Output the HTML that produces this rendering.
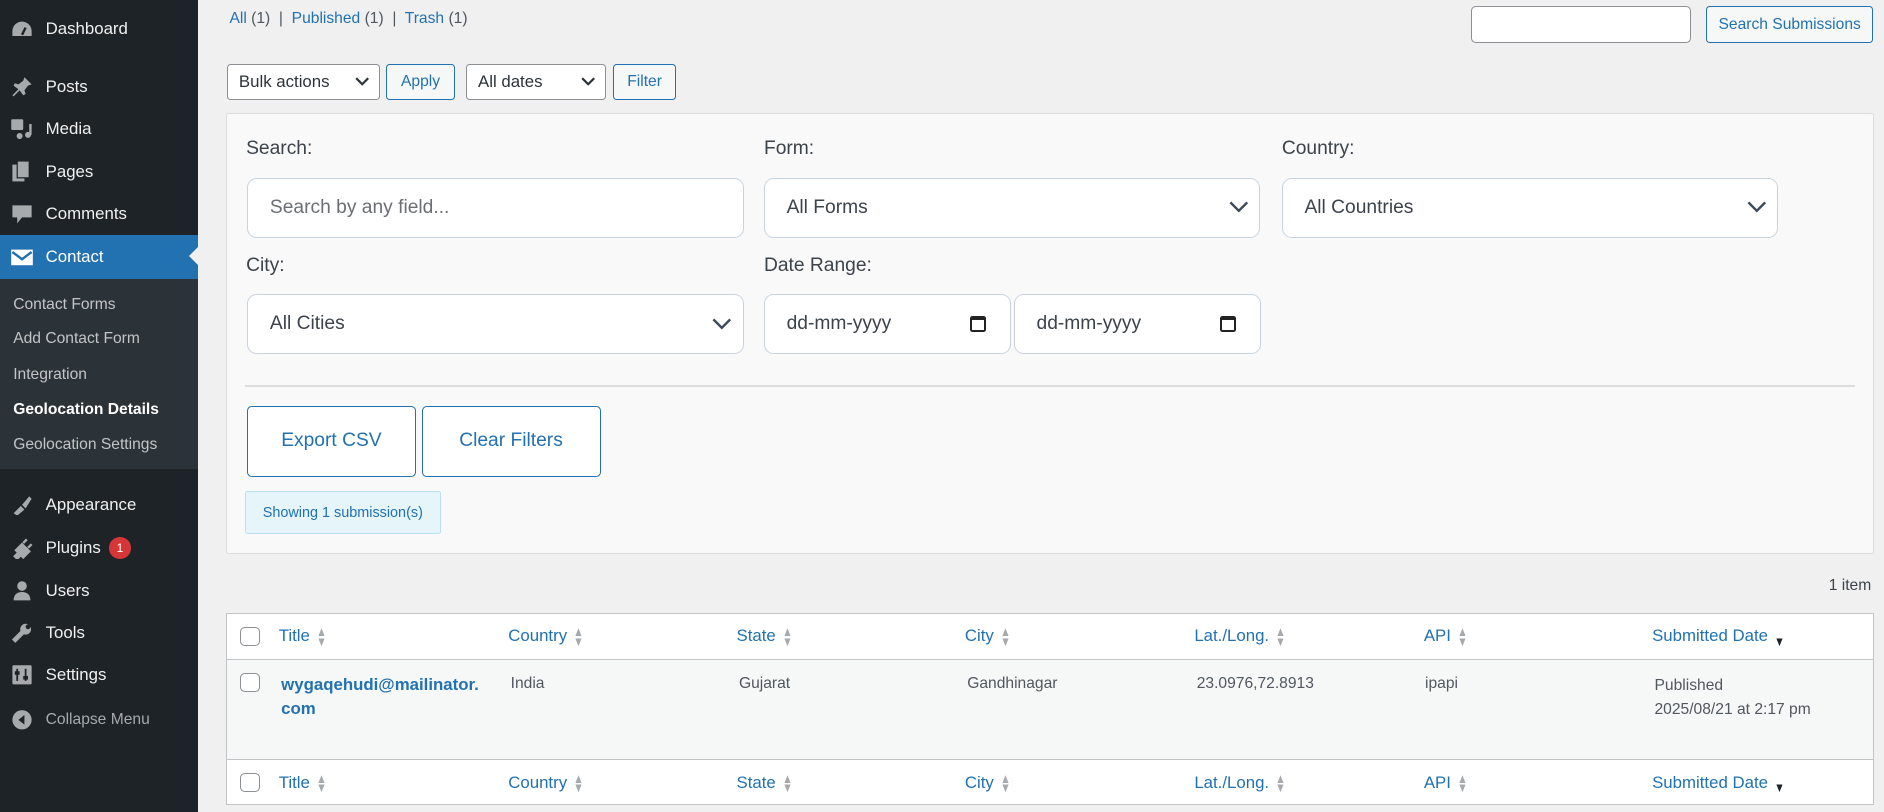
<!DOCTYPE html>
<html><head><meta charset="utf-8"><style>
*{box-sizing:border-box;margin:0;padding:0}
html,body{width:1884px;height:812px;overflow:hidden;background:#f0f0f1}
#w{width:1568px;height:676px;zoom:1.20153;position:relative;font-family:"Liberation Sans",sans-serif;color:#3c434a;font-size:13px}
#sb{position:absolute;left:0;top:0;width:165px;height:676px;background:#1d2327}
.mi{position:absolute;left:0;width:165px;height:34px;color:#f0f0f1;font-size:14px;display:flex;align-items:center}
.mi svg{margin-left:8px;margin-right:10px;flex:none}
.sub{position:absolute;left:0;top:232px;width:165px;height:158px;background:#2c3338}
.sub div{position:absolute;left:11px;color:#c3c4c7;font-size:13px}
a{color:#2271b1;text-decoration:none}
.lbl{position:absolute;font-size:16px;color:#3c434a}
.in{position:absolute;background:#fff;border:1px solid #c8d3e0;border-radius:8px;height:50px;font-size:16px;color:#3c434a;display:flex;align-items:center;padding-left:18px}
.chev{position:absolute;right:8px;top:18px}
.btn{position:absolute;border:1px solid #2271b1;border-radius:3px;color:#2271b1;background:#f6f7f7;font-size:13px;display:flex;align-items:center;justify-content:center}
.sel{position:absolute;border:1px solid #8c8f94;border-radius:3px;background:#fff;font-size:14px;color:#2c3338;display:flex;align-items:center;padding-left:9px}
.hd{position:absolute;font-size:14px;color:#2271b1}
.ar{color:#a7aaad;font-size:11px;display:inline-block;line-height:8px;vertical-align:middle;margin-left:4px;transform:scaleX(.8)}
.cb{position:absolute;width:16px;height:16px;border:1px solid #8c8f94;border-radius:4px;background:#fff}
.cell{position:absolute;font-size:13px;color:#50575e}
</style></head><body><div id="w">
<div id="sb">
<div class="mi" style="top:7px"><svg width="20" height="18"><path d="M10 3a8 8 0 0 0-8 8v4h16v-4a8 8 0 0 0-8-8z" fill="#a7aaad"/><path d="M10 14l3-6" stroke="#1d2327" stroke-width="2"/></svg>Dashboard</div>
<div class="mi" style="top:55px"><svg width="20" height="18"><path d="M12 1l6 6-3 1-3 4 1 3-2 1-3-4-5 5-1-1 5-5-4-3 1-2 3 1 4-3z" fill="#a7aaad"/></svg>Posts</div>
<div class="mi" style="top:90px"><svg width="20" height="18"><rect x="1" y="1" width="10" height="9" rx="1" fill="#a7aaad"/><circle cx="8" cy="15" r="2.5" fill="#a7aaad"/><circle cx="15" cy="14" r="2.5" fill="#a7aaad"/><path d="M17 5v9" stroke="#a7aaad" stroke-width="2"/></svg>Media</div>
<div class="mi" style="top:126px"><svg width="20" height="18"><rect x="2" y="3" width="10" height="14" fill="#a7aaad"/><rect x="6" y="0" width="10" height="14" fill="#a7aaad" stroke="#1d2327"/></svg>Pages</div>
<div class="mi" style="top:161px"><svg width="20" height="18"><path d="M2 2h16v10H10l-4 5v-5H2z" fill="#a7aaad"/></svg>Comments</div>
<div class="mi" style="top:196px;height:36px;background:#2271b1;color:#fff"><svg width="20" height="18"><rect x="1" y="3" width="18" height="13" fill="#fff"/><path d="M2 5l8 6 8-6" stroke="#2271b1" stroke-width="2" fill="none"/></svg>Contact<span style="position:absolute;right:0;top:10px;border:8px solid transparent;border-right-color:#f0f0f1"></span></div>
<div class="sub">
<div style="top:14px">Contact Forms</div>
<div style="top:43px">Add Contact Form</div>
<div style="top:73px">Integration</div>
<div style="top:102px;color:#fff;font-weight:bold">Geolocation Details</div>
<div style="top:131px">Geolocation Settings</div>
</div>
<div class="mi" style="top:403px"><svg width="20" height="18"><path d="M3 16l6-6 3 3-6 5zM10 9l6-7 2 2-5 8z" fill="#a7aaad"/></svg>Appearance</div>
<div class="mi" style="top:439px"><svg width="20" height="18"><path d="M4 16l3-3-2-2 5-5 6 6-5 5-2-2-3 3zM11 5l3-3M15 9l3-3" stroke="#a7aaad" stroke-width="2" fill="#a7aaad"/></svg>Plugins<span style="margin-left:7px;background:#d63638;color:#fff;border-radius:9px;font-size:10px;width:18px;height:18px;display:inline-flex;align-items:center;justify-content:center">1</span></div>
<div class="mi" style="top:475px"><svg width="20" height="18"><circle cx="10" cy="5" r="4" fill="#a7aaad"/><path d="M3 17c0-5 3-7 7-7s7 2 7 7z" fill="#a7aaad"/></svg>Users</div>
<div class="mi" style="top:510px"><svg width="20" height="18"><path d="M3 16l8-8" stroke="#a7aaad" stroke-width="4"/><circle cx="13" cy="6" r="4.5" fill="#a7aaad"/><circle cx="15" cy="4" r="2" fill="#1d2327"/></svg>Tools</div>
<div class="mi" style="top:545px"><svg width="20" height="18"><rect x="2" y="1" width="16" height="16" rx="1" fill="#a7aaad"/><path d="M6 4v10M13 4v10" stroke="#1d2327" stroke-width="1.5"/><rect x="4" y="6" width="4" height="3" fill="#1d2327"/><rect x="11" y="10" width="4" height="3" fill="#1d2327"/></svg>Settings</div>
<div class="mi" style="top:582px;color:#a7aaad;font-size:13px"><svg width="20" height="18"><circle cx="10" cy="9" r="8" fill="#a7aaad"/><path d="M12 5l-5 4 5 4z" fill="#1d2327"/></svg>Collapse Menu</div>
</div>

<div style="position:absolute;left:191px;top:8px;font-size:13px;color:#50575e"><a>All</a> (1) &nbsp;|&nbsp; <a>Published</a> (1) &nbsp;|&nbsp; <a>Trash</a> (1)</div>
<div style="position:absolute;left:1224px;top:5px;width:183px;height:31px;background:#fff;border:1px solid #8c8f94;border-radius:4px"></div>
<div class="btn" style="left:1420px;top:5px;width:139px;height:31px">Search Submissions</div>

<div class="sel" style="left:189px;top:53px;width:127px;height:30px">Bulk actions<svg style="position:absolute;right:8px;top:10px" width="12" height="8"><path d="M1 1l5 5 5-5" stroke="#2c3338" stroke-width="1.8" fill="none"/></svg></div>
<div class="btn" style="left:321px;top:53px;width:58px;height:30px">Apply</div>
<div class="sel" style="left:388px;top:53px;width:116px;height:30px">All dates<svg style="position:absolute;right:8px;top:10px" width="12" height="8"><path d="M1 1l5 5 5-5" stroke="#2c3338" stroke-width="1.8" fill="none"/></svg></div>
<div class="btn" style="left:510px;top:53px;width:53px;height:30px">Filter</div>

<div style="position:absolute;left:188px;top:94px;width:1372px;height:367px;background:#f9f9f9;border:1px solid #dcdcde;border-radius:2px">
<div class="lbl" style="left:16px;top:20px">Search:</div>
<div class="lbl" style="left:447px;top:20px">Form:</div>
<div class="lbl" style="left:878px;top:20px">Country:</div>
<div class="in" style="left:17px;top:53px;width:413px;color:#6b6f73">Search by any field...</div>
<div class="in" style="left:447px;top:53px;width:413px">All Forms<svg class="chev" width="18" height="12"><path d="M2 2l7 7 7-7" stroke="#3c4a5c" stroke-width="2" fill="none"/></svg></div>
<div class="in" style="left:878px;top:53px;width:413px">All Countries<svg class="chev" width="18" height="12"><path d="M2 2l7 7 7-7" stroke="#3c4a5c" stroke-width="2" fill="none"/></svg></div>
<div class="lbl" style="left:16px;top:117px">City:</div>
<div class="lbl" style="left:447px;top:117px">Date Range:</div>
<div class="in" style="left:17px;top:150px;width:413px">All Cities<svg class="chev" width="18" height="12"><path d="M2 2l7 7 7-7" stroke="#3c4a5c" stroke-width="2" fill="none"/></svg></div>
<div class="in" style="left:447px;top:150px;width:206px">dd-mm-yyyy<span style="position:absolute;right:20px;top:17px;width:14px;height:14px;border:2px solid #222;border-top-width:4px;border-radius:2px"></span></div>
<div class="in" style="left:655px;top:150px;width:206px">dd-mm-yyyy<span style="position:absolute;right:20px;top:17px;width:14px;height:14px;border:2px solid #222;border-top-width:4px;border-radius:2px"></span></div>
<div style="position:absolute;left:15px;top:226px;width:1340px;height:1px;background:#dcdcde"></div>
<div class="btn" style="left:17px;top:243px;width:140px;height:59px;background:#fff;font-size:16px;border-radius:4px">Export CSV</div>
<div class="btn" style="left:162px;top:243px;width:149px;height:59px;background:#fff;font-size:16px;border-radius:4px">Clear Filters</div>
<div style="position:absolute;left:15px;top:314px;width:163px;height:36px;background:#e5f5fa;border:1px solid #b9e1f0;border-radius:2px;color:#2271b1;font-size:12px;display:flex;align-items:center;justify-content:center">Showing 1 submission(s)</div>
</div>

<div style="position:absolute;left:1522px;top:480px;font-size:13px">1 item</div>

<div style="position:absolute;left:188px;top:510px;width:1372px;height:160px;background:#fff;border:1px solid #c3c4c7">
<div style="position:absolute;left:0;top:38px;width:1370px;height:84px;background:#f6f7f7;border-top:1px solid #c3c4c7;border-bottom:1px solid #c3c4c7"></div>
</div>
<div class="cb" style="left:200px;top:522px"></div>
<div class="cb" style="left:200px;top:560px"></div>
<div class="cb" style="left:200px;top:643px"></div>
<div class="hd" style="left:232px;top:521px">Title<span class="ar">▲<br>▼</span></div>
<div class="hd" style="left:423px;top:521px">Country<span class="ar">▲<br>▼</span></div>
<div class="hd" style="left:613px;top:521px">State<span class="ar">▲<br>▼</span></div>
<div class="hd" style="left:803px;top:521px">City<span class="ar">▲<br>▼</span></div>
<div class="hd" style="left:994px;top:521px">Lat./Long.<span class="ar">▲<br>▼</span></div>
<div class="hd" style="left:1185px;top:521px">API<span class="ar">▲<br>▼</span></div>
<div class="hd" style="left:1375px;top:521px">Submitted Date<span class="ar" style="color:#1d2327">&nbsp;<br>▼</span></div>
<div class="hd" style="left:232px;top:643px">Title<span class="ar">▲<br>▼</span></div>
<div class="hd" style="left:423px;top:643px">Country<span class="ar">▲<br>▼</span></div>
<div class="hd" style="left:613px;top:643px">State<span class="ar">▲<br>▼</span></div>
<div class="hd" style="left:803px;top:643px">City<span class="ar">▲<br>▼</span></div>
<div class="hd" style="left:994px;top:643px">Lat./Long.<span class="ar">▲<br>▼</span></div>
<div class="hd" style="left:1185px;top:643px">API<span class="ar">▲<br>▼</span></div>
<div class="hd" style="left:1375px;top:643px">Submitted Date<span class="ar" style="color:#1d2327">&nbsp;<br>▼</span></div>
<div class="cell" style="left:234px;top:560px;font-size:14px;font-weight:bold;color:#2271b1;line-height:20px">wygaqehudi@mailinator.<br>com</div>
<div class="cell" style="left:425px;top:562px">India</div>
<div class="cell" style="left:615px;top:562px">Gujarat</div>
<div class="cell" style="left:805px;top:562px">Gandhinagar</div>
<div class="cell" style="left:996px;top:562px">23.0976,72.8913</div>
<div class="cell" style="left:1186px;top:562px">ipapi</div>
<div class="cell" style="left:1377px;top:561px;line-height:20px">Published<br>2025/08/21 at 2:17 pm</div>
</div></body></html>
